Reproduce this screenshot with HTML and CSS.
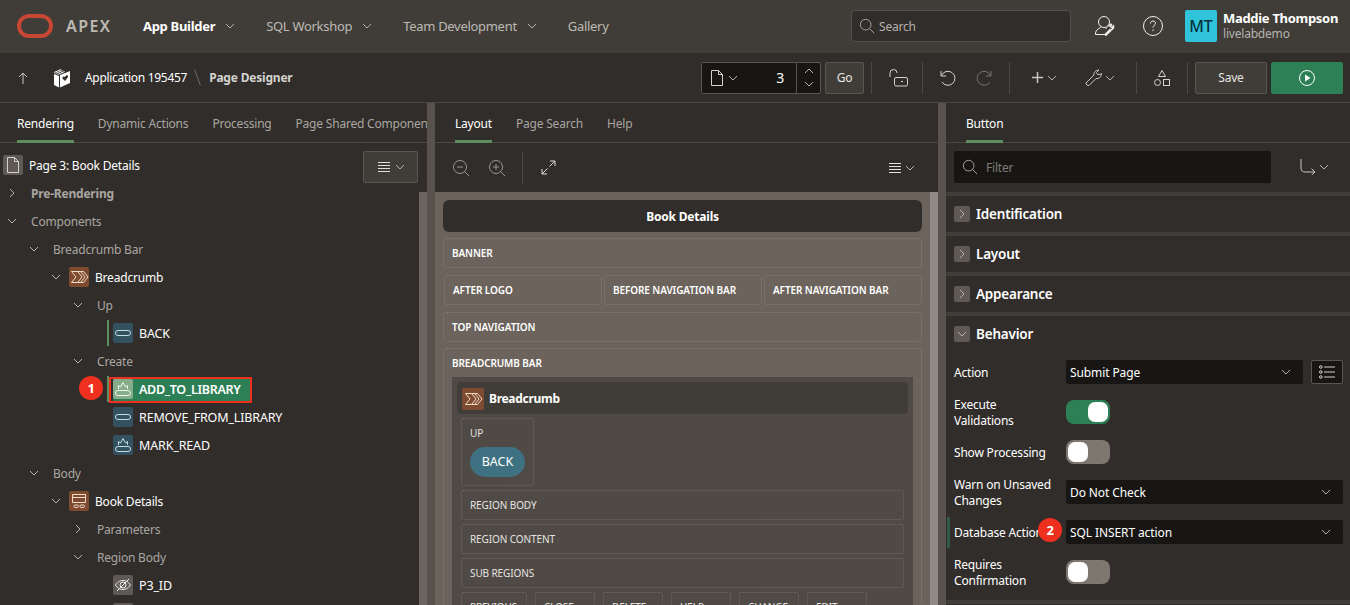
FILE: index.html
```html
<!DOCTYPE html>
<html lang="en">
    <head>
        <meta charset="UTF-8" />
        <title>Page Designer</title>
        <link rel="stylesheet" href="styles.css">
    </head>
    <body>
        <svg class="defs" width="0" height="0">
            <symbol id="chev-d" viewBox="0 0 10 10"><path d="M1 3l4 4 4-4" fill="none" stroke="currentColor"/></symbol>
            <symbol id="chev-r" viewBox="0 0 10 10"><path d="M3 1l4 4-4 4" fill="none" stroke="currentColor"/></symbol>
            <symbol id="chev-u" viewBox="0 0 10 10"><path d="M1 7l4-4 4 4" fill="none" stroke="currentColor"/></symbol>
            <symbol id="search" viewBox="0 0 18 18"><circle cx="7.500" cy="7.500" r="6" fill="none" stroke="currentColor"/><path d="M12 12l5 5" stroke="currentColor"/></symbol>
            <symbol id="page" viewBox="0 0 14 16"><path d="M1.500.5h7l4 4v11h-11zM8.500.5v4h4" fill="none" stroke="currentColor"/></symbol>
            <symbol id="lines" viewBox="0 0 14 12"><path d="M1 1.500h12M1 4.500h12M1 7.500h12M1 10.500h12" stroke="currentColor"/></symbol>
            <symbol id="pill" viewBox="0 0 20 20"><rect x="2.500" y="7.500" width="15" height="5" rx="2.500" fill="none" stroke="currentColor"/></symbol>
            <symbol id="hot" viewBox="0 0 20 20"><rect x="2.500" y="11.500" width="15" height="5" rx="2.500" fill="none" stroke="currentColor"/><path d="M5.500 10V6.500L7.500 8 10 3.500 12.500 8l2-1.500V10" fill="none" stroke="currentColor"/></symbol>
            <symbol id="crumb" viewBox="0 0 20 20"><path d="M2.500 4.500h6L13 10l-4.500 5.500h-6L7 10zM8.500 4.500h3L16 10l-4.500 5.500h-3M11.500 4.500h3L19 10l-4.500 5.500h-3" fill="none" stroke="currentColor"/></symbol>
            <symbol id="region" viewBox="0 0 20 20"><path d="M3.500 3.500h13v8h-13zM3.500 6.500h13" fill="none" stroke="currentColor"/><rect x="5" y="14" width="4.500" height="2.500" rx="1.200" fill="none" stroke="currentColor"/><rect x="11" y="14" width="4.500" height="2.500" rx="1.200" fill="none" stroke="currentColor"/></symbol>
            <symbol id="hidden" viewBox="0 0 20 20"><path d="M2.500 10C5 6.500 7.500 5.500 10 5.500s5 1 7.500 4.500C15 13.500 12.500 14.500 10 14.500S5 13.500 2.500 10z" fill="none" stroke="currentColor"/><circle cx="10" cy="10" r="3" fill="none" stroke="currentColor"/><path d="M4 16L16 4" stroke="currentColor"/></symbol>
        </svg>

        <header class="topbar">
            <svg class="logo" width="36" height="24" viewBox="0 0 36 24"><rect x="2" y="2" width="32" height="20" rx="10" fill="none" stroke="#c74634" stroke-width="4"/></svg>
            <span class="brand">APEX</span>
            <nav class="topnav">
                <a class="nav-item active">App Builder <svg class="ic10"><use href="#chev-d"/></svg></a>
                <a class="nav-item">SQL Workshop <svg class="ic10"><use href="#chev-d"/></svg></a>
                <a class="nav-item">Team Development <svg class="ic10"><use href="#chev-d"/></svg></a>
                <a class="nav-item">Gallery</a>
            </nav>
            <div class="top-search"><svg class="ic16"><use href="#search"/></svg><span>Search</span></div>
            <svg class="admin-ic" width="20" height="20" viewBox="0 0 20 20" fill="none" stroke="#f0efed"><circle cx="9" cy="6" r="5.500"/><path d="M6 10.500c0 2-5.500 2.500-5.500 6.500v1.500h9.500M12 11.500l-1.500 1.500"/><path d="M10 19.500l6-6" stroke-width="2.500"/><path d="M13.500 10.500c.5-1.500 2-2.500 3-2l-1 2 1.500 1 1.500-1.500c.5 1.500-.5 3.500-2.500 3.500" stroke-width="1.500"/></svg>
            <svg class="help-ic" width="20" height="20" viewBox="0 0 20 20" fill="none" stroke="#f0efed"><circle cx="10" cy="10" r="9.500"/><path d="M7.500 7.500c0-1.500 1-2.500 2.500-2.500s2.500 1 2.500 2.300c0 2-2.500 2-2.500 4.200M10 13.500v1.500"/></svg>
            <div class="avatar">MT</div>
            <div class="user"><b>Maddie Thompson</b><span>livelabdemo</span></div>
        </header>

        <div class="toolbar">
            <svg class="up-ic" width="10" height="12" viewBox="0 0 10 12" fill="none" stroke="#c9c7c3"><path d="M5 12V1M1 5l4-4 4 4"/></svg>
            <svg class="app-ic" width="18" height="20" viewBox="0 0 18 20"><path d="M7 7l10-4v12L7 19.500z" fill="#fff"/><path d="M1 6l5 2v11.500L1 17z" fill="#fff"/><path d="M1 4.500L8 1.500M2.500 5.500L9.500 2.500M4.500 6.500L11.500 3.500" stroke="#fff" fill="none"/><path d="M12 13l-2.500-2.500c-.7-1.500 1.500-3 2.500-1.500 1-2.500 3.500-2 3 0z" fill="#312d2a"/></svg>
            <span class="crumb-app">Application 195457</span>
            <span class="crumb-sep"></span>
            <b class="crumb-page">Page Designer</b>
            <div class="page-box">
                <svg class="page-ic"><use href="#page"/></svg>
                <svg class="ic10"><use href="#chev-d"/></svg>
                <span class="page-num">3</span>
                <div class="spin"><svg class="ic10"><use href="#chev-u"/></svg><svg class="ic10"><use href="#chev-d"/></svg></div>
            </div>
            <button class="btn go">Go</button>
            <span class="vline first"></span>
            <svg class="tool lock" width="19" height="18" viewBox="0 0 19 18" fill="none" stroke="#d4d2ce"><path d="M1 8V4a3.500 3.500 0 0 1 7 0"/><rect x="5.500" y="8.500" width="13" height="8.500" rx="1.500"/><path d="M12 12.500h2"/></svg>
            <span class="vline"></span>
            <svg class="tool undo" width="16" height="16" viewBox="0 0 16 16" fill="none" stroke="#d4d2ce"><path d="M1 1v5h5M1.500 5.500A7 7 0 1 1 2 12"/></svg>
            <svg class="tool redo" width="16" height="16" viewBox="0 0 16 16" fill="none" stroke="#77736e"><path d="M15 1v5h-5M14.500 5.500A7 7 0 1 0 14 12"/></svg>
            <span class="vline"></span>
            <svg class="tool plus" width="11" height="11" viewBox="0 0 11 11" stroke="#c9c7c3" stroke-width="1.500"><path d="M0 5.500h11M5.500 0v11"/></svg>
            <svg class="ic10 tool-chev"><use href="#chev-d"/></svg>
            <svg class="tool wrench" width="17" height="17" viewBox="0 0 17 17" fill="none" stroke="#c9c7c3"><path d="M1 14l8-8c-.5-2.500 1.500-5 5-5l-2.500 2.500 1 2L15 5.500l1.500-1c0 3.500-2.500 5.500-5.500 5l-7 7c-1 .5-3.500-1-3-2.500z"/></svg>
            <svg class="ic10 tool-chev"><use href="#chev-d"/></svg>
            <span class="vline"></span>
            <svg class="tool shapes" width="16" height="16" viewBox="0 0 16 16" fill="none" stroke="#d4d2ce"><path d="M8 .5l3.500 6h-7z"/><circle cx="3.500" cy="12.500" r="3"/><rect x="9.500" y="9.500" width="6" height="6"/></svg>
            <span class="vline"></span>
            <button class="btn save">Save</button>
            <button class="btn run"><svg width="16" height="16" viewBox="0 0 16 16"><circle cx="8" cy="8" r="7.500" fill="none" stroke="#fff"/><path d="M6 4.500l5.500 3.500L6 11.500z" fill="#fff"/></svg></button>
        </div>

        <main class="panes">
            <section class="pane left">
                <div class="tabs"><a class="tab on">Rendering</a><a class="tab">Dynamic Actions</a><a class="tab">Processing</a><a class="tab">Page Shared Components</a></div>
                <div class="left-body">
                    <div class="tree">
                        <div class="page-row">
                            <span class="tile grey"><svg class="page-ic"><use href="#page"/></svg></span>
                            <span class="page-title">Page 3: Book Details</span>
                            <button class="btn menu"><svg class="ic14"><use href="#lines"/></svg><svg class="ic10"><use href="#chev-d"/></svg></button>
                        </div>
                        <div class="row l0"><svg class="ic10"><use href="#chev-r"/></svg><b class="muted">Pre-Rendering</b></div>
                        <div class="row l0"><svg class="ic10"><use href="#chev-d"/></svg><span class="muted">Components</span></div>
                        <div class="row l1"><svg class="ic10"><use href="#chev-d"/></svg><span class="muted">Breadcrumb Bar</span></div>
                        <div class="row l2"><svg class="ic10"><use href="#chev-d"/></svg><span class="tile brown"><svg class="ic20"><use href="#crumb"/></svg></span><span class="name">Breadcrumb</span></div>
                        <div class="row l3"><svg class="ic10"><use href="#chev-d"/></svg><span class="muted">Up</span></div>
                        <div class="row leaf marked"><span class="tile teal"><svg class="ic20"><use href="#pill"/></svg></span><span class="name">BACK</span></div>
                        <div class="row l3"><svg class="ic10"><use href="#chev-d"/></svg><span class="muted">Create</span></div>
                        <div class="row leaf marked">
                            <span class="badge one">1</span>
                            <div class="selected"><div class="sel-fill"><span class="tile sage"><svg class="ic20"><use href="#hot"/></svg></span><span class="name">ADD_TO_LIBRARY</span></div></div>
                        </div>
                        <div class="row leaf"><span class="tile teal"><svg class="ic20"><use href="#pill"/></svg></span><span class="name">REMOVE_FROM_LIBRARY</span></div>
                        <div class="row leaf"><span class="tile teal"><svg class="ic20"><use href="#hot"/></svg></span><span class="name">MARK_READ</span></div>
                        <div class="row l1"><svg class="ic10"><use href="#chev-d"/></svg><span class="muted">Body</span></div>
                        <div class="row l2"><svg class="ic10"><use href="#chev-d"/></svg><span class="tile brown"><svg class="ic20"><use href="#region"/></svg></span><span class="name">Book Details</span></div>
                        <div class="row l3"><svg class="ic10"><use href="#chev-r"/></svg><span class="muted">Parameters</span></div>
                        <div class="row l3"><svg class="ic10"><use href="#chev-d"/></svg><span class="muted">Region Body</span></div>
                        <div class="row leaf"><span class="tile grey"><svg class="ic20"><use href="#hidden"/></svg></span><span class="name">P3_ID</span></div>
                        <div class="row leaf"><span class="tile grey"><svg class="ic20"><use href="#hidden"/></svg></span></div>
                    </div>
                    <div class="vscroll"></div>
                </div>
            </section>
            <div class="splitter"></div>

            <section class="pane middle">
                <div class="tabs"><a class="tab on">Layout</a><a class="tab">Page Search</a><a class="tab">Help</a></div>
                <div class="layout-tools">
                    <svg class="zoom-ic" width="16" height="16" viewBox="0 0 16 16" fill="none" stroke="#9a9691"><circle cx="7" cy="7" r="6.500"/><path d="M11.500 11.500L16 16M4 7h6"/></svg>
                    <svg class="zoom-ic" width="16" height="16" viewBox="0 0 16 16" fill="none" stroke="#9a9691"><circle cx="7" cy="7" r="6.500"/><path d="M11.500 11.500L16 16M4 7h6M7 4v6"/></svg>
                    <span class="vline tall"></span>
                    <svg class="expand-ic" width="15" height="15" viewBox="0 0 15 15" fill="none" stroke="#e0dedb"><path d="M9 1h5v5M14 1L8.500 6.500M1 9v5h5M1 14l5.500-5.500"/></svg>
                    <span class="spacer"></span>
                    <svg class="ic14"><use href="#lines"/></svg><svg class="ic10"><use href="#chev-d"/></svg>
                </div>
                <div class="layout-body">
                    <div class="canvas">
                        <div class="page-head">Book Details</div>
                        <div class="zone">BANNER</div>
                        <div class="zone-row"><div class="zone">AFTER LOGO</div><div class="zone">BEFORE NAVIGATION BAR</div><div class="zone">AFTER NAVIGATION BAR</div></div>
                        <div class="zone">TOP NAVIGATION</div>
                        <div class="zone open">
                            <div class="zone-label">BREADCRUMB BAR</div>
                            <div class="region">
                                <div class="region-head"><span class="tile brown"><svg class="ic20"><use href="#crumb"/></svg></span><b>Breadcrumb</b></div>
                                <div class="slot up"><span>UP</span><span class="pill-btn">BACK</span></div>
                                <div class="slot">REGION BODY</div>
                                <div class="slot">REGION CONTENT</div>
                                <div class="slot">SUB REGIONS</div>
                                <div class="slot-row"><div class="slot w66">PREVIOUS</div><div class="slot w60">CLOSE</div><div class="slot w60">DELETE</div><div class="slot w60">HELP</div><div class="slot w60">CHANGE</div><div class="slot w60">EDIT</div></div>
                            </div>
                        </div>
                    </div>
                    <div class="canvas-scroll"></div>
                </div>
            </section>
            <div class="splitter"></div>

            <section class="pane right">
                <div class="tabs"><a class="tab on">Button</a></div>
                <div class="filter-row">
                    <div class="filter"><svg class="ic16"><use href="#search"/></svg><span>Filter</span></div>
                    <svg class="goto-ic" width="16" height="16" viewBox="0 0 16 16" fill="none" stroke="#c9c7c3"><path d="M1 0v9c0 3 2 4 4 4h10M11.500 9.500L15 13l-3.500 3"/></svg>
                    <svg class="ic10"><use href="#chev-d"/></svg>
                </div>
                <div class="group"><span class="tog"><svg class="ic10"><use href="#chev-r"/></svg></span>Identification</div>
                <div class="group"><span class="tog"><svg class="ic10"><use href="#chev-r"/></svg></span>Layout</div>
                <div class="group"><span class="tog"><svg class="ic10"><use href="#chev-r"/></svg></span>Appearance</div>
                <div class="group"><span class="tog"><svg class="ic10"><use href="#chev-d"/></svg></span>Behavior</div>
                <div class="form">
                    <div class="field"><label>Action</label><div class="select short">Submit Page<svg class="ic10"><use href="#chev-d"/></svg></div>
                        <button class="list-btn"><svg width="16" height="14" viewBox="0 0 16 14" fill="none" stroke="#d4d2ce"><circle cx="1.800" cy="2" r="1.300"/><circle cx="1.800" cy="7" r="1.300"/><circle cx="1.800" cy="12" r="1.300"/><path d="M5 2h11M5 7h11M5 12h11"/></svg></button></div>
                    <div class="field"><label>Execute Validations</label><span class="toggle on"></span></div>
                    <div class="field"><label>Show Processing</label><span class="toggle"></span></div>
                    <div class="field"><label>Warn on Unsaved Changes</label><div class="select">Do Not Check<svg class="ic10"><use href="#chev-d"/></svg></div></div>
                    <div class="field changed"><label>Database Action</label><span class="badge two">2</span><div class="select">SQL INSERT action<svg class="ic10"><use href="#chev-d"/></svg></div></div>
                    <div class="field"><label>Requires Confirmation</label><span class="toggle"></span></div>
                </div>
                <div class="group"></div>
            </section>
        </main>
    </body>
</html>
```

FILE: styles.css
```css
* {
    box-sizing: border-box;
}
html,
body {
    margin: 0;
    height: 605px;
    overflow: hidden;
    background: #312d2a;
    color: #fff;
    font-family: "Noto Sans", "Open Sans", sans-serif;
    font-size: 12px;
    letter-spacing: -0.2px;
}
.defs {
    position: absolute;
}
svg {
    display: block;
    flex: none;
}
.ic10 {
    width: 10px;
    height: 10px;
    color: #b5b2ad;
}
.ic14 {
    width: 14px;
    height: 12px;
    color: #e0dedb;
}
.ic16 {
    width: 16px;
    height: 16px;
    color: #b5b2ad;
}
.ic20 {
    width: 20px;
    height: 20px;
}
.page-ic {
    width: 14px;
    height: 16px;
    color: #d4d2ce;
}
button {
    font: inherit;
    color: inherit;
    letter-spacing: inherit;
}

/* top bar */
.topbar {
    height: 53px;
    background: #403d38;
    display: flex;
    align-items: center;
    padding: 0 0 1px 17px;
}
.brand {
    margin-left: 13px;
    width: 77px;
    font-size: 16px;
    font-weight: 600;
    letter-spacing: 1.4px;
    color: #bdbab5;
}
.topnav {
    display: flex;
    gap: 31px;
    width: 708px;
}
.nav-item {
    display: flex;
    align-items: center;
    gap: 10px;
    font-size: 13px;
    letter-spacing: -0.3px;
    color: #bdbab5;
}
.nav-item.active {
    color: #fff;
    font-weight: 700;
}
.top-search {
    width: 220px;
    height: 32px;
    background: #312d2a;
    border: 1px solid #55504b;
    border-radius: 4px;
    display: flex;
    align-items: center;
    gap: 4px;
    padding-left: 7px;
    color: #b5b2ad;
}
.admin-ic {
    margin-left: 24px;
}
.help-ic {
    margin-left: 28px;
}
.avatar {
    margin-left: 22px;
    width: 32px;
    height: 32px;
    border-radius: 2px;
    background: #2fc4da;
    color: #06303c;
    font-size: 16px;
    font-weight: 500;
    letter-spacing: 0;
    display: flex;
    align-items: center;
    justify-content: center;
}
.user {
    margin-left: 6px;
    display: flex;
    flex-direction: column;
    line-height: 16px;
}
.user b {
    font-size: 13px;
    letter-spacing: -0.3px;
}
.user span {
    color: #b5b2ad;
}

/* toolbar */
.toolbar {
    height: 50px;
    border-bottom: 1px solid #4b4743;
    display: flex;
    align-items: center;
    padding-left: 18px;
}
.app-ic {
    margin-left: 25px;
}
.crumb-app {
    margin-left: 14px;
    letter-spacing: -0.3px;
}
.crumb-sep {
    width: 1px;
    height: 17px;
    margin: 0 11px 0 10px;
    background: #6b6660;
    transform: rotate(-20deg);
}
.crumb-page {
    color: #d4d2ce;
    margin-right: auto;
}
.page-box {
    width: 120px;
    height: 32px;
    background: #181614;
    border: 1px solid #5a5550;
    border-radius: 2px;
    display: flex;
    align-items: center;
    padding-left: 8px;
    gap: 4px;
}
.page-num {
    margin-left: auto;
    margin-right: 8px;
    font-size: 14px;
}
.spin {
    width: 24px;
    height: 30px;
    border-left: 1px solid #5a5550;
    display: flex;
    flex-direction: column;
    align-items: center;
    justify-content: space-around;
    padding: 2px 0;
}
.btn {
    background: #403d38;
    border: 1px solid #5a5550;
    border-radius: 2px;
    height: 32px;
    color: #e6e4e1;
    padding: 0;
}
.go {
    width: 39px;
    margin-left: 4px;
}
.vline {
    width: 1px;
    height: 32px;
    background: #4b4743;
}
.vline.first {
    margin-left: 7px;
}
.lock {
    margin: 0 14px 0 17px;
}
.undo {
    margin: 0 20px 0 17px;
}
.redo {
    margin-right: 17px;
}
.plus {
    margin-left: 22px;
}
.tool-chev {
    margin-left: 4px;
}
.wrench {
    margin-left: 28px;
}
.wrench + .tool-chev {
    margin-left: 3px;
    margin-right: 21px;
}
.shapes {
    margin: 0 17px;
}
.save {
    width: 72px;
    margin-left: 7px;
}
.run {
    width: 72px;
    margin: 0 7px 0 4px;
    background: #2d7f56;
    border-color: #2d7f56;
    display: flex;
    align-items: center;
    justify-content: center;
}

/* panes */
.panes {
    display: flex;
    height: 502px;
}
.pane {
    min-width: 0;
    overflow: hidden;
    display: flex;
    flex-direction: column;
}
.left {
    width: 427px;
}
.middle {
    width: 503px;
}
.right {
    width: 404px;
}
.splitter {
    width: 8px;
    background: #57524c;
}
.tabs {
    height: 40px;
    flex: none;
    display: flex;
    gap: 24px;
    padding-left: 20px;
    border-bottom: 1px solid #4b4743;
    white-space: nowrap;
}
.left .tabs {
    padding-left: 17px;
}
.tab {
    height: 40px;
    line-height: 42px;
    color: #a9a6a1;
}
.tab.on {
    color: #fff;
    border-bottom: 3px solid #5f8f61;
}

/* tree */
.left-body {
    display: flex;
    flex: 1;
    min-height: 0;
}
.tree {
    flex: 1;
    min-width: 0;
    padding-top: 8px;
}
.vscroll {
    width: 8px;
    margin-top: 49px;
    background: #6b6660;
}
.page-row {
    height: 28px;
    display: flex;
    padding-left: 3px;
    gap: 6px;
    align-items: flex-start;
}
.page-row .tile {
    margin-top: 4px;
}
.page-title {
    line-height: 30px;
}
.menu {
    width: 55px;
    height: 32px;
    margin-left: auto;
    margin-right: 1px;
    display: flex;
    align-items: center;
    justify-content: center;
    gap: 4px;
}
.tile {
    width: 20px;
    height: 20px;
    border-radius: 2px;
    display: flex;
    align-items: center;
    justify-content: center;
    flex: none;
    color: #f0dcc8;
}
.tile.grey {
    background: #5f5a55;
    color: #f0efed;
}
.tile.brown {
    background: #7f4b30;
}
.tile.teal {
    background: #33515e;
    color: #c5dde5;
}
.tile.sage {
    background: #86ad8a;
    color: #f0f5f0;
}
.row {
    height: 28px;
    display: flex;
    align-items: center;
    position: relative;
    white-space: nowrap;
}
.muted {
    color: #a9a6a1;
    margin-left: 14px;
}
.name {
    margin-left: 6px;
}
.leaf .name {
    font-size: 12.500px;
    letter-spacing: -0.15px;
}
.l0 {
    padding-left: 7px;
}
.l1 {
    padding-left: 29px;
}
.l2 {
    padding-left: 51px;
}
.l2 .tile {
    margin-left: 8px;
}
.l3 {
    padding-left: 73px;
}
.leaf {
    padding-left: 113px;
}
.marked::before {
    content: "";
    position: absolute;
    left: 107px;
    top: 1px;
    bottom: 1px;
    width: 2px;
    background: #5f8f61;
}
.selected {
    width: 143px;
    height: 26px;
    margin: 2px 0 0 -4px;
    border: 2px solid #f0301e;
    padding-left: 2px;
}
.sel-fill {
    height: 22px;
    background: #2d7f56;
    display: flex;
    align-items: flex-start;
    line-height: 21px;
}
.sel-fill .name {
    font-weight: 600;
    letter-spacing: -0.3px;
}
.badge {
    position: absolute;
    width: 24px;
    height: 24px;
    border-radius: 50%;
    background: #f0301e;
    color: #fff;
    font-weight: 700;
    font-size: 13px;
    display: flex;
    align-items: center;
    justify-content: center;
    z-index: 1;
}
.badge.one {
    left: 79px;
    top: 1px;
}
.badge.two {
    left: 84px;
    top: -2px;
}

/* layout */
.layout-tools {
    height: 49px;
    flex: none;
    display: flex;
    align-items: center;
    padding: 0 23px 0 18px;
}
.zoom-ic + .zoom-ic {
    margin-left: 20px;
}
.vline.tall {
    margin: 0 18px 0 17px;
}
.spacer {
    flex: 1;
}
.layout-tools .ic10 {
    margin-left: 3px;
}
.layout-body {
    display: flex;
    flex: 1;
    min-height: 0;
}
.canvas {
    width: 495px;
    background: #6b635c;
    padding: 8px;
    display: flex;
    flex-direction: column;
    gap: 7px;
    font-size: 10px;
    letter-spacing: -0.1px;
}
.canvas-scroll {
    width: 8px;
    background: #8f8a84;
}
.page-head {
    height: 32px;
    flex: none;
    margin-bottom: -1px;
    background: #312d2a;
    border-radius: 6px;
    font-size: 12px;
    letter-spacing: -0.2px;
    font-weight: 700;
    display: flex;
    align-items: center;
    justify-content: center;
}
.zone {
    height: 30px;
    flex: none;
    border: 1px dotted #877f77;
    border-radius: 4px;
    padding-left: 8px;
    line-height: 28px;
    font-weight: 600;
}
.zone-row {
    display: flex;
    gap: 2px;
    padding-left: 1px;
}
.zone-row .zone {
    flex: 1;
}
.zone.open {
    height: auto;
    flex: none;
    margin-top: -1px;
}
.zone-label {
    height: 28px;
}
.region {
    background: #4f4a45;
    margin-right: 8px;
    padding: 5px 5px 0;
    height: 260px;
    font-weight: 400;
    color: #e6e4e1;
}
.region-head {
    height: 32px;
    background: #403d38;
    border-radius: 4px;
    display: flex;
    align-items: center;
    gap: 5px;
    padding: 1px 0 0 5px;
    font-size: 12px;
    letter-spacing: -0.3px;
    color: #fff;
    margin-bottom: 4px;
}
.region-head .tile {
    width: 22px;
    height: 22px;
}
.slot {
    height: 30px;
    margin: 0 4px 4px;
    border: 1px dotted #6f6962;
    border-radius: 2px;
    padding-left: 8px;
    line-height: 28px;
}
.slot.up {
    width: 73px;
    height: 68px;
    display: flex;
    flex-direction: column;
    align-items: flex-start;
}
.pill-btn {
    width: 55px;
    height: 30px;
    border-radius: 15px;
    background: #3e7283;
    color: #fff;
    font-size: 12.500px;
    letter-spacing: 0;
    display: flex;
    align-items: center;
    justify-content: center;
}
.slot-row {
    display: flex;
    gap: 8px;
    margin: 0 4px;
}
.slot-row .slot {
    margin: 0;
}
.w66 {
    width: 66px;
}
.w60 {
    width: 60px;
}

/* property editor */
.filter-row {
    height: 49px;
    flex: none;
    display: flex;
    align-items: center;
    padding: 0 0 1px 8px;
}
.filter {
    width: 317px;
    height: 32px;
    background: #181614;
    border-radius: 2px;
    display: flex;
    align-items: center;
    gap: 8px;
    padding-left: 8px;
    color: #7d7973;
}
.goto-ic {
    margin-left: 29px;
}
.filter-row .ic10 {
    margin-left: 3px;
}
.group {
    height: 40px;
    flex: none;
    border-top: 4px solid #413d39;
    display: flex;
    align-items: center;
    gap: 6px;
    padding: 0 0 1px 8px;
    font-size: 13.500px;
    font-weight: 600;
}
.tog {
    width: 16px;
    height: 16px;
    background: #5f5a55;
    border-radius: 2px;
    display: flex;
    align-items: center;
    justify-content: center;
}
.form {
    height: 248px;
    flex: none;
    padding: 8px 7px 0 8px;
    display: flex;
    flex-direction: column;
    gap: 16px;
}
.field {
    height: 24px;
    display: flex;
    align-items: center;
    position: relative;
}
.field label {
    width: 112px;
    flex: none;
    line-height: 16px;
    padding: 2px 8px 0 0;
}
.changed label {
    white-space: nowrap;
}
.changed::before {
    content: "";
    position: absolute;
    left: -7px;
    top: -3px;
    width: 3px;
    height: 31px;
    background: #2f5a48;
}
.select {
    flex: 1;
    height: 24px;
    background: #181614;
    border-radius: 2px;
    display: flex;
    align-items: center;
    justify-content: space-between;
    padding: 0 12px 0 4px;
    letter-spacing: -0.1px;
}
.select.short {
    flex: none;
    width: 237px;
}
.list-btn {
    width: 32px;
    height: 24px;
    margin-left: 8px;
    background: #181614;
    border: 1px solid #5a5550;
    border-radius: 2px;
    padding: 0;
    display: flex;
    align-items: center;
    justify-content: center;
}
.toggle {
    width: 44px;
    height: 24px;
    border-radius: 8px;
    background: #7d7770;
    padding: 2px;
    display: flex;
}
.toggle::after {
    content: "";
    width: 20px;
    height: 20px;
    border-radius: 7px;
    background: #fff;
}
.toggle.on {
    background: #2d7f56;
    justify-content: flex-end;
}
```
